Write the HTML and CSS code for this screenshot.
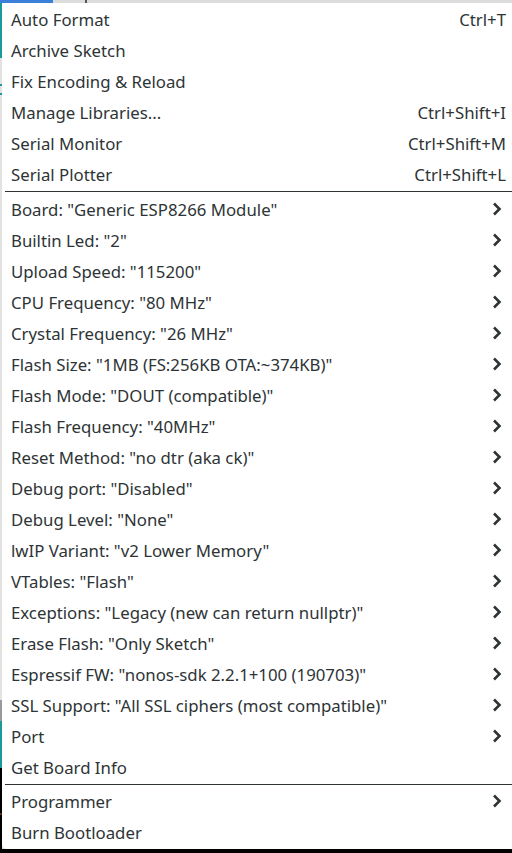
FILE: index.html
```html
<!DOCTYPE html>
<html>
<head>
<meta charset="utf-8">
<link rel="stylesheet" href="styles.css">
</head>
<body>
<div class="backdrop">
  <div class="topbar"><span class="tab-active"></span><span class="tick"></span></div>
  <div class="leftstrip"></div>
</div>
<div class="menu">
  <div class="item"><span class="label">Auto Format</span><span class="accel">Ctrl+T</span></div>
  <div class="item"><span class="label">Archive Sketch</span></div>
  <div class="item"><span class="label">Fix Encoding &amp; Reload</span></div>
  <div class="item"><span class="label">Manage Libraries...</span><span class="accel">Ctrl+Shift+I</span></div>
  <div class="item"><span class="label">Serial Monitor</span><span class="accel">Ctrl+Shift+M</span></div>
  <div class="item"><span class="label">Serial Plotter</span><span class="accel">Ctrl+Shift+L</span></div>
  <div class="sep"></div>
  <div class="item sub"><span class="label">Board: "Generic ESP8266 Module"</span><svg class="chev" viewBox="0 0 10 16"><path d="M2 2.5 L7.5 8 L2 13.5"/></svg></div>
  <div class="item sub"><span class="label">Builtin Led: "2"</span><svg class="chev" viewBox="0 0 10 16"><path d="M2 2.5 L7.5 8 L2 13.5"/></svg></div>
  <div class="item sub"><span class="label">Upload Speed: "115200"</span><svg class="chev" viewBox="0 0 10 16"><path d="M2 2.5 L7.5 8 L2 13.5"/></svg></div>
  <div class="item sub"><span class="label">CPU Frequency: "80 MHz"</span><svg class="chev" viewBox="0 0 10 16"><path d="M2 2.5 L7.5 8 L2 13.5"/></svg></div>
  <div class="item sub"><span class="label">Crystal Frequency: "26 MHz"</span><svg class="chev" viewBox="0 0 10 16"><path d="M2 2.5 L7.5 8 L2 13.5"/></svg></div>
  <div class="item sub"><span class="label">Flash Size: "1MB (FS:256KB OTA:~374KB)"</span><svg class="chev" viewBox="0 0 10 16"><path d="M2 2.5 L7.5 8 L2 13.5"/></svg></div>
  <div class="item sub"><span class="label">Flash Mode: "DOUT (compatible)"</span><svg class="chev" viewBox="0 0 10 16"><path d="M2 2.5 L7.5 8 L2 13.5"/></svg></div>
  <div class="item sub"><span class="label">Flash Frequency: "40MHz"</span><svg class="chev" viewBox="0 0 10 16"><path d="M2 2.5 L7.5 8 L2 13.5"/></svg></div>
  <div class="item sub"><span class="label">Reset Method: "no dtr (aka ck)"</span><svg class="chev" viewBox="0 0 10 16"><path d="M2 2.5 L7.5 8 L2 13.5"/></svg></div>
  <div class="item sub"><span class="label">Debug port: "Disabled"</span><svg class="chev" viewBox="0 0 10 16"><path d="M2 2.5 L7.5 8 L2 13.5"/></svg></div>
  <div class="item sub"><span class="label">Debug Level: "None"</span><svg class="chev" viewBox="0 0 10 16"><path d="M2 2.5 L7.5 8 L2 13.5"/></svg></div>
  <div class="item sub"><span class="label">lwIP Variant: "v2 Lower Memory"</span><svg class="chev" viewBox="0 0 10 16"><path d="M2 2.5 L7.5 8 L2 13.5"/></svg></div>
  <div class="item sub"><span class="label">VTables: "Flash"</span><svg class="chev" viewBox="0 0 10 16"><path d="M2 2.5 L7.5 8 L2 13.5"/></svg></div>
  <div class="item sub"><span class="label">Exceptions: "Legacy (new can return nullptr)"</span><svg class="chev" viewBox="0 0 10 16"><path d="M2 2.5 L7.5 8 L2 13.5"/></svg></div>
  <div class="item sub"><span class="label">Erase Flash: "Only Sketch"</span><svg class="chev" viewBox="0 0 10 16"><path d="M2 2.5 L7.5 8 L2 13.5"/></svg></div>
  <div class="item sub"><span class="label">Espressif FW: "nonos-sdk 2.2.1+100 (190703)"</span><svg class="chev" viewBox="0 0 10 16"><path d="M2 2.5 L7.5 8 L2 13.5"/></svg></div>
  <div class="item sub"><span class="label">SSL Support: "All SSL ciphers (most compatible)"</span><svg class="chev" viewBox="0 0 10 16"><path d="M2 2.5 L7.5 8 L2 13.5"/></svg></div>
  <div class="item sub"><span class="label">Port</span><svg class="chev" viewBox="0 0 10 16"><path d="M2 2.5 L7.5 8 L2 13.5"/></svg></div>
  <div class="item"><span class="label">Get Board Info</span></div>
  <div class="sep sep-thin"></div>
  <div class="item sub"><span class="label">Programmer</span><svg class="chev" viewBox="0 0 10 16"><path d="M2 2.5 L7.5 8 L2 13.5"/></svg></div>
  <div class="item"><span class="label">Burn Bootloader</span></div>
</div>
</body>
</html>
```

FILE: styles.css
```css
html, body {
  margin: 0;
  padding: 0;
  width: 512px;
  height: 853px;
  overflow: hidden;
  background: #000;
}

.backdrop {
  position: absolute;
  left: 0;
  top: 0;
  width: 512px;
  height: 849px;
  background: #e0e0e0;
}

.topbar {
  height: 3px;
  background: #dcdcdc;
  display: flex;
  align-items: stretch;
}

.tab-active {
  width: 53px;
  background: #3a7fd9;
}

.tick {
  width: 2px;
  margin-left: 32px;
  background: #555;
}

.leftstrip {
  position: absolute;
  left: 0;
  top: 3px;
  width: 2px;
  height: 846px;
  background: linear-gradient(to bottom,
    #1a9a9a 0px, #1a9a9a 55px,
    #e2e2e2 55px, #e2e2e2 81px,
    #1a9a9a 81px, #1a9a9a 83px,
    #e2e2e2 83px, #e2e2e2 90px,
    #1a9a9a 90px, #1a9a9a 92px,
    #e2e2e2 92px, #e2e2e2 697px,
    #9a9a9a 697px, #9a9a9a 718px,
    #1a9a9a 718px, #1a9a9a 765px,
    #000 765px, #000 810px,
    #5a2a1a 810px, #5a2a1a 812px,
    #000 812px);
}

.menu {
  position: absolute;
  left: 2px;
  top: 3px;
  width: 510px;
  background: #ffffff;
  border-bottom-left-radius: 5px;
  padding: 0.5px 0 0 0;
  height: 846px;
  box-sizing: border-box;
  font-family: "Noto Sans", "Open Sans", sans-serif;
  font-size: 16.8px;
  color: #2e3436;
}

.item {
  height: 31px;
  display: flex;
  align-items: center;
  justify-content: space-between;
  padding: 0 6px 0 9px;
  white-space: nowrap;
}

.accel {
  color: #2e3436;
}

.chev {
  width: 10px;
  height: 16px;
  margin-right: 4px;
}

.chev path {
  fill: none;
  stroke: #2e3436;
  stroke-width: 2.6;
  stroke-linecap: butt;
  stroke-linejoin: miter;
}

.sep {
  height: 4px;
  display: flex;
  align-items: center;
  padding-left: 3px;
}

.sep-thin {
  height: 3px;
}

.sep::before {
  content: "";
  display: block;
  flex: 1;
  height: 1px;
  background: #2e3436;
}
```
